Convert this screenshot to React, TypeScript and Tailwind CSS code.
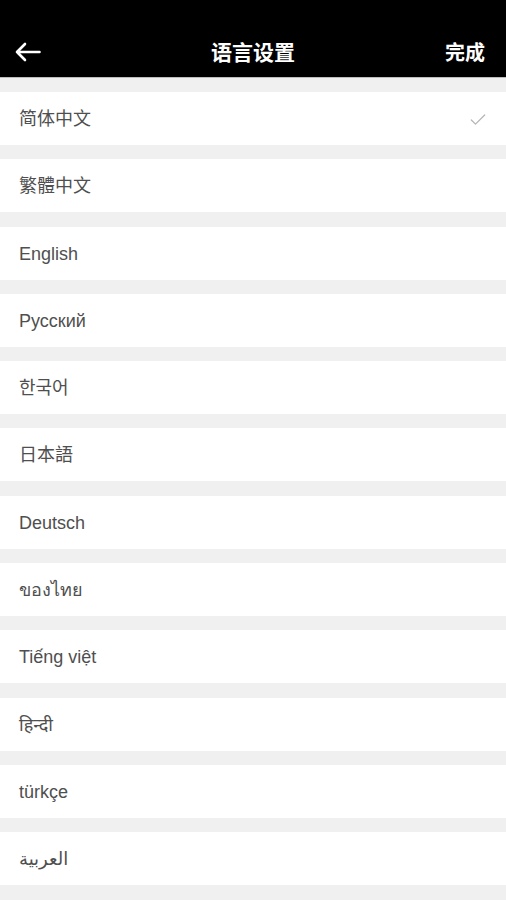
import { Check } from 'lucide-react';

const LANGUAGES = [
  '简体中文',
  '繁體中文',
  'English',
  'Русский',
  '한국어',
  '日本語',
  'Deutsch',
  'ของไทย',
  'Tiếng việt',
  'हिन्दी',
  'türkçe',
  'العربية',
];

const FONT = { fontFamily: '"Liberation Sans", Roboto, "Noto Sans CJK SC", "Noto Sans CJK KR", "Noto Sans", "DejaVu Sans", sans-serif' };
const CJK = { fontFamily: '"Noto Sans CJK SC", sans-serif' };

export default function App() {
  const selected = 0;

  return (
    <div className="min-h-[900px] w-full bg-[#f0f0f0]" style={FONT}>
      <header className="h-[78px] bg-black pt-[26px] border-b border-[#bdbdbd]">
        <div className="grid h-[51px] grid-cols-3 items-center px-[15px] text-white">
          <svg width="26" height="20" viewBox="0 0 26 20" fill="none" stroke="currentColor" strokeWidth="2.6" strokeLinecap="round" strokeLinejoin="round">
            <path d="M24.5 10H2M10 2L2 10l8 8" />
          </svg>
          <h1 className="justify-self-center text-[21px] font-bold" style={CJK}>
            语言设置
          </h1>
          <button className="justify-self-end pr-[6px] text-[20px] font-bold" style={CJK}>
            完成
          </button>
        </div>
      </header>

      <ul className="flex flex-col gap-[14.3px] pt-[14px]">
        {LANGUAGES.map((name, i) => (
          <li key={name} className="flex h-[53px] items-center justify-between bg-white pl-[19px] pr-[18px] pt-[2px]">
            <span className="text-[18px] text-[#4f4f4f]">{name}</span>
            {i === selected && <Check className="h-5 w-5 text-[#b5b5b5]" strokeWidth={1.5} />}
          </li>
        ))}
      </ul>
    </div>
  );
}
